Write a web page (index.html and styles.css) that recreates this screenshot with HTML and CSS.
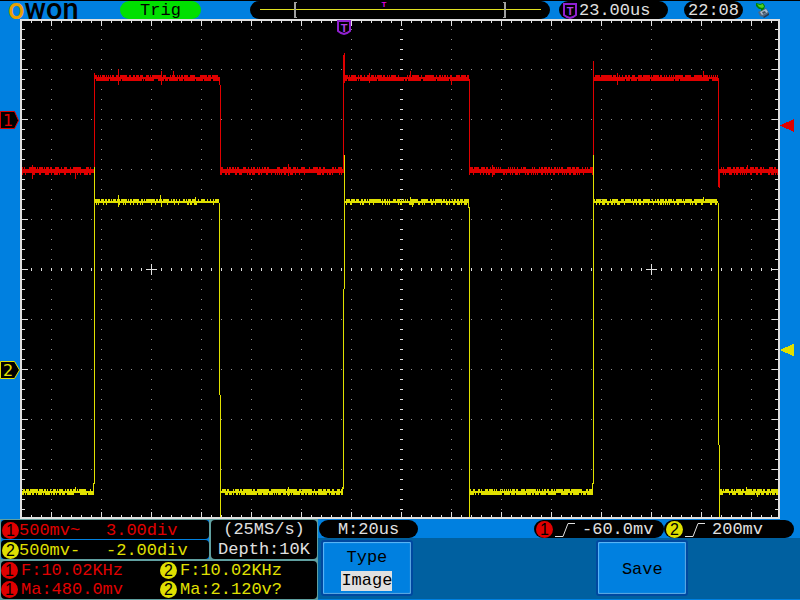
FILE: index.html
```html
<!DOCTYPE html>
<html lang="en">
<head>
<meta charset="utf-8">
<title>OWON oscilloscope</title>
<link rel="stylesheet" href="styles.css">
</head>
<body>
<header class="topbar">
  <div class="logo"><span class="logo-ring">o</span>won</div>
  <div class="pill pill-state">Trig</div>
  <div class="pill pill-memory">
    <svg class="memory" viewBox="250 1 300 18" preserveAspectRatio="none" aria-hidden="true">
      <rect class="memory-line" x="260" y="9" width="281" height="1"/>
      <path class="memory-bracket" d="M297 2h-3v16h3v-1h-1v-14h1zM503 2h3v16h-3v-1h1v-14h-1z"/>
      <text class="memory-t" x="384" y="7">T</text>
    </svg>
  </div>
  <div class="pill pill-offset">
    <svg class="shield" viewBox="0 0 14 16" aria-hidden="true">
      <path class="shield-shape" d="M1 1h12v11l-3 2-3 1-3-1-3-2z"/>
      <text class="shield-t" x="7" y="12">T</text>
    </svg>
    <span>23.00us</span>
  </div>
  <div class="pill pill-clock">22:08</div>
  <svg class="usb" viewBox="0 0 16 16" aria-hidden="true">
    <path d="M3 10l8-4 3 5-6 4-3-1z" fill="#506880"/>
    <path d="M5 10l6-3 2 3-6 3z" fill="#b0c0d0"/>
    <path d="M7 10l3-1 1 2-3 1z" fill="#405060"/>
    <path d="M8 15l6-4v2l-5 3z" fill="#303848"/>
    <path d="M1 1l4 1 3-1 2 3-1 3-3 2v-2l-2 0-3-3z" fill="#008000"/>
    <path d="M2 2l3 1 3-1 1 3-2 1-3-1z" fill="#50d020"/>
  </svg>
</header>

<main class="scope">
  <svg class="gutter" viewBox="0 19 20 500" preserveAspectRatio="none" aria-hidden="true">
    <path class="flag flag-1" d="M.5 111.500h14l4 9-4 8h-14z"/>
    <text class="flag-text text-1" x="8" y="126">1</text>
    <path class="flag flag-2" d="M.5 361.500h14l5 8.500-5 8.500h-14z"/>
    <text class="flag-text text-2" x="8" y="376">2</text>
  </svg>
  <div class="plot">
    <svg class="plot-area" id="plot" viewBox="22 21 756 496" preserveAspectRatio="none" role="img" aria-label="Channel 1 and channel 2 square waves">
      <path class="grid-dots" id="dots"/>
      <path class="grid-ticks" id="ticks"/>
      <path class="trace-1" id="trace1"/>
      <path class="trace-2" id="trace2"/>
      <path class="shield-shape" d="M338 21h12v10l-3 2-3 1-3-1-3-2z"/>
      <text class="shield-t" x="344" y="32">T</text>
    </svg>
  </div>
  <svg class="gutter" viewBox="780 19 20 500" preserveAspectRatio="none" aria-hidden="true">
    <path class="trace-1" d="M780 125.500l14-6.500v13z"/>
    <path class="trace-2" d="M780 350l14-6.500v13z"/>
  </svg>
</main>

<footer class="bottom">
  <section class="readouts">
    <div class="scales">
      <div class="panel scale red"><span class="badge badge-1">1</span><span class="volts">500mv~</span><span>3.00div</span></div>
      <div class="panel scale yellow"><span class="badge badge-2">2</span><span class="volts">500mv-</span><span>-2.00div</span></div>
    </div>
    <div class="panel sampling"><span>(25MS/s)</span><span>Depth:10K</span></div>
    <div class="panel measures">
      <div class="measure red"><span class="badge badge-1">1</span>F:10.02KHz</div>
      <div class="measure yellow"><span class="badge badge-2">2</span>F:10.02KHz</div>
      <div class="measure red"><span class="badge badge-1">1</span>Ma:480.0mv</div>
      <div class="measure yellow"><span class="badge badge-2">2</span>Ma:2.120v?</div>
    </div>
  </section>
  <section class="controls">
    <div class="status">
      <div class="pill pill-time">M:20us</div>
      <div class="pill pill-trigger">
        <span class="badge badge-1">1</span>
        <svg class="edge" viewBox="0 0 20 16" aria-hidden="true"><path d="M0 14.500h8l5-13h7"/></svg>
        <span class="level">-60.0mv</span>
      </div>
      <div class="pill pill-trigger">
        <span class="badge badge-2">2</span>
        <svg class="edge" viewBox="0 0 20 16" aria-hidden="true"><path d="M0 14.500h8l5-13h7"/></svg>
        <span class="level">200mv</span>
      </div>
    </div>
    <nav class="menu">
      <button class="softkey softkey-type" type="button"><span>Type</span><span class="value">Image</span></button>
      <button class="softkey softkey-save" type="button">Save</button>
    </nav>
  </section>
</footer>
<script src="scope.js"></script>
</body>
</html>
```
FILE: styles.css
```css
* { box-sizing: border-box; }

body {
  margin: 0;
  min-height: 100vh;
  display: flex;
  flex-direction: column;
  background: #0080e0;
  color: #e0e0e0;
  font: 17px/18px "Liberation Mono", monospace;
}

svg { display: block; }

.red { color: #e00000; }
.yellow { color: #e0e000; }

/* Top bar */
.topbar {
  display: grid;
  grid-template-columns: 120px 130px 1fr 125px 71px 45px;
  height: 19px;
  border-top: 1px solid #000;
}

.logo {
  padding-left: 8px;
  color: #000;
  font: 500 29px/16px Roboto, sans-serif;
  height: 18px;
}
.logo-ring { color: #e8a000; }

.pill {
  display: flex;
  align-items: center;
  height: 18px;
  border-radius: 9px;
  background: #000;
  line-height: 20px;
  white-space: nowrap;
}
.pill-state,
.pill-offset,
.pill-clock,
.pill-time,
.pill-trigger { padding-top: 2px; }
.pill-state {
  width: 81px;
  justify-content: center;
  background: #00e000;
  color: #000;
}
.pill-memory { margin-right: 9px; }
.pill-offset { width: 109px; padding-left: 4px; gap: 2px; }
.pill-clock { width: 59px; justify-content: center; }

.memory { width: 100%; height: 18px; }
.memory-line { fill: #e0e020; }
.memory-bracket { fill: #a0a0a0; }
.memory-t {
  fill: #e000e0;
  font: bold 8px "Liberation Sans", sans-serif;
  text-anchor: middle;
}

.shield { flex: none; width: 14px; height: 16px; }
.shield-shape { fill: #000; stroke: #9020d0; stroke-width: 2; }
.shield-t {
  fill: #b040e8;
  font: bold 11px "Liberation Sans", sans-serif;
  text-anchor: middle;
}
.usb { width: 16px; height: 16px; margin-top: 1px; }

/* Waveform display */
.scope { flex: 1; display: flex; min-height: 0; }
.gutter { width: 20px; height: 500px; }
.plot {
  flex: 1;
  border: 2px solid #e0e0e0;
  background: #000;
}
.plot-area { width: 100%; height: 496px; overflow: visible; }
.grid-dots { fill: #909090; }
.grid-ticks { fill: #e0e0e0; }
.grid-dots, .grid-ticks, .trace-1, .trace-2 { shape-rendering: crispEdges; }
.trace-1 { fill: #e00000; }
.trace-2 { fill: #e0e000; }

.flag { fill: #000; }
.flag-1 { stroke: #e00000; }
.flag-2 { stroke: #e0e000; }
.flag-text {
  font: 16px "DejaVu Sans", sans-serif;
  text-anchor: middle;
}
.text-1 { fill: #e00000; }
.text-2 { fill: #e0e000; }

/* Bottom area */
.bottom {
  display: flex;
  height: 81px;
}

.readouts {
  width: 318px;
  display: grid;
  grid-template-columns: 208px 1fr;
  grid-template-rows: 39px 38px;
  gap: 2px;
  padding: 1px;
  background: #60a0a0;
}
.scales { display: grid; grid-template-rows: 19px 19px; gap: 1px; background: #0080e0; }
.panel { background: #000; border-radius: 4px; }
.scale { display: flex; align-items: center; line-height: 20px; padding: 2px 0 0 1px; }
.volts { width: 87px; }
.sampling {
  display: flex;
  flex-direction: column;
  align-items: center;
  justify-content: space-between;
  padding-top: 1px;
}
.measures {
  grid-column: 1 / -1;
  display: grid;
  grid-template-columns: 159px 1fr;
}
.measure { display: flex; align-items: center; gap: 3px; }

.badge {
  flex: none;
  width: 17px;
  height: 17px;
  border-radius: 50%;
  color: #000;
  text-align: center;
  font: 16px/17px "Liberation Sans", sans-serif;
}
.badge-1 { background: #e00000; }
.badge-2 { background: #e0e000; }

.controls { flex: 1; display: flex; flex-direction: column; }
.status { display: flex; align-items: center; height: 19px; padding: 0 6px 0 1px; }
.pill-time { width: 99px; justify-content: center; margin-right: auto; }
.pill-trigger { width: 130px; padding-left: 2px; gap: 2px; }
.level { padding-left: 5px; }
.edge { flex: none; width: 20px; height: 16px; fill: none; stroke: #e0e0e0; }

.menu {
  flex: 1;
  display: grid;
  grid-template-columns: repeat(5, 1fr);
  padding: 2px 20px 3px 3px;
  background: #0060a0;
  border-bottom: 1px solid #0080e0;
}
.softkey {
  display: flex;
  flex-direction: column;
  align-items: center;
  justify-content: center;
  gap: 4px;
  padding: 4px 0 0;
  border: 2px solid #0048a0;
  border-radius: 3px;
  background: #0080e0;
  box-shadow: inset 1px 1px 1px #60b8f8, inset -1px -1px 1px #60a8e0;
  color: #000;
  font: inherit;
}
.softkey-type { grid-column: 1; }
.softkey-save { grid-column: 4; }
.value { height: 20px; line-height: 20px; background: #e0e0e0; }
```
FILE: scope.js
```js
const LEFT = 22, RIGHT = 778, TOP = 21, BOTTOM = 517;

const box = (x, y, w, h) => `M${x} ${y}h${w}v${h}h${-w}z`;
const put = (id, parts) => document.getElementById(id).setAttribute('d', parts.join(''));

// Graticule: dotted division lines, centre axes and edge ticks.
const dots = [], ticks = [];
for (let x = 51; x < RIGHT; x += 50)
  for (let y = 29; y < BOTTOM; y += 10) dots.push(box(x, y, 1, 1));
for (let y = 69; y < BOTTOM; y += 50)
  for (let x = 31; x < RIGHT; x += 10) dots.push(box(x, y, 1, 1));

for (let y = 29; y < BOTTOM; y += 10) {
  const len = y % 50 === 19 ? 6 : 3;
  ticks.push(box(LEFT, y, len, 1), box(RIGHT - len, y, len, 1), box(400, y, 3, 1));
}
for (let x = 31; x < RIGHT; x += 10) {
  const len = x % 50 === 1 ? 5 : 2;
  ticks.push(box(x, TOP, 1, len), box(x, BOTTOM - len, 1, len), box(x, 268, 1, 3));
}
for (const x of [151, 651]) ticks.push(box(x - 5, 269, 11, 1), box(x, 264, 1, 11));
put('dots', dots);
put('ticks', ticks);

// Repeatable noise.
let seed = 7;
const rnd = () => (seed = (seed * 16807) % 2147483647) / 2147483647;

// A level: a solid core with ragged pixels above and below it.
function level(x1, x2, y, core, above, below) {
  const out = [box(x1, y, x2 - x1, core)];
  for (let x = x1; x < x2; x++) {
    if (rnd() < above) out.push(box(x, y - 2, 1, 2));
    if (rnd() < below) out.push(box(x, y + core, 1, 2));
  }
  return out;
}

const highs = [[95, 219], [344, 469], [594, 718]];
const lows = [[22, 94], [220, 343], [469, 593], [719, 778]];

put('trace1', [
  ...highs.flatMap(([a, b]) => level(a, b, 77, 2, .7, .9)),
  ...lows.flatMap(([a, b]) => level(a, b, 169, 4, .5, .4)),
  ...[[94, 73, 94], [219, 77, 8], [220, 85, 90], [343, 55, 118], [344, 53, 30],
    [469, 79, 96], [593, 61, 112], [718, 78, 109], [719, 170, 18],
    [118, 69, 16], [161, 71, 14], [173, 71, 8], [32, 165, 14], [75, 167, 12],
    [288, 164, 12], [369, 73, 10], [410, 71, 10], [451, 75, 10], [492, 165, 12],
    [617, 73, 12], [703, 71, 8], [747, 165, 8]].map(([x, y, h]) => box(x, y, 1, h))
]);

put('trace2', [
  ...highs.flatMap(([a, b]) => level(a, b, 201, 2, .7, .3)),
  ...lows.flatMap(([a, b]) => level(a, b, 491, 2, .7, .7)),
  ...[[94, 167, 317], [93, 483, 8], [219, 203, 192], [220, 395, 122],
    [344, 155, 134], [343, 289, 200], [342, 487, 4], [468, 203, 5], [469, 207, 310],
    [593, 155, 329], [592, 483, 8], [718, 203, 242], [719, 445, 72],
    [118, 195, 12], [160, 195, 8], [161, 199, 8], [195, 197, 8], [75, 487, 6],
    [288, 487, 9], [410, 197, 8], [412, 201, 6], [703, 197, 6], [746, 487, 6],
    [757, 491, 6]].map(([x, y, h]) => box(x, y, 1, h))
]);
```
